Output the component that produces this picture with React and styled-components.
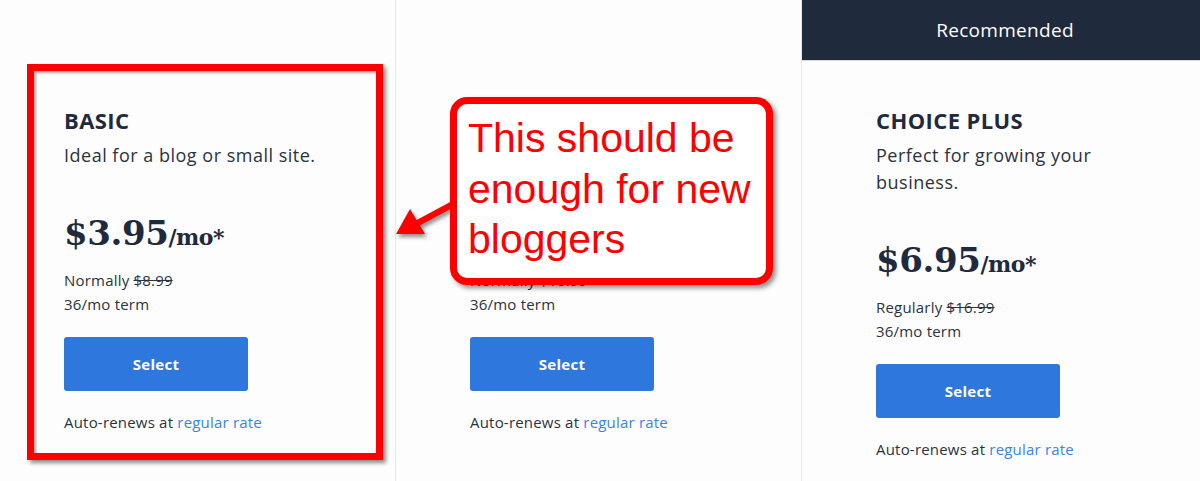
import React from "react";
import styled, { createGlobalStyle } from "styled-components";

const Global = createGlobalStyle`
  html, body { margin: 0; padding: 0; background: #fdfdfd; }
  * { box-sizing: border-box; }
`;

const Page = styled.div`
  position: relative;
  width: 1200px;
  height: 481px;
  overflow: hidden;
  background: #fdfdfd;
  font-family: "Open Sans", "Lato", sans-serif;
  color: #2b3240;
`;

const Columns = styled.div`
  display: grid;
  grid-template-columns: 396px 406px 398px;
  height: 100%;
`;

const Column = styled.section`
  display: flex;
  flex-direction: column;
  border-right: ${(p) => (p.$last ? "none" : "1px solid #e6e7ea")};
  background: #fdfdfd;
`;

const Header = styled.div`
  height: 61px;
  flex: none;
  display: flex;
  align-items: center;
  justify-content: center;
  padding-left: ${(p) => (p.$dark ? "8px" : "0")};
  background: ${(p) => (p.$dark ? "#1f2a3d" : "transparent")};
  border-bottom: ${(p) => (p.$dark ? "1px solid #d5d8de" : "none")};
  color: #ffffff;
  font-size: 19px;
  letter-spacing: 0.3px;
`;

const Body = styled.div`
  display: flex;
  flex-direction: column;
  align-items: flex-start;
  padding: 46px 0 0 ${(p) => p.$pad}px;
`;

const Title = styled.h2`
  margin: 0;
  font-size: 22px;
  line-height: 26px;
  font-weight: 700;
  color: #1f2a3d;
  letter-spacing: 0.4px;
`;

const Desc = styled.p`
  margin: 9px 0 0;
  max-width: 262px;
  font-size: 18px;
  line-height: 27px;
  color: #2b3240;
  letter-spacing: 0.5px;
`;

const Price = styled.div`
  margin-top: 44px;
  font-family: "DejaVu Serif", "Liberation Serif", serif;
  font-weight: 700;
  font-size: 34px;
  line-height: 40px;
  color: #1f2a3d;
  letter-spacing: -0.4px;
`;

const Per = styled.span`
  font-size: 22px;
  letter-spacing: -0.5px;
`;

const Meta = styled.div`
  margin-top: 11px;
  font-size: 15px;
  line-height: 24px;
  color: #2b3240;
  letter-spacing: 0.2px;
`;

const Strike = styled.span`
  text-decoration: line-through;
`;

const SelectButton = styled.button`
  margin-top: 21px;
  width: 184px;
  height: 54px;
  border: none;
  border-radius: 3px;
  background: #2e77dc;
  color: #ffffff;
  font-family: "Open Sans", "Lato", sans-serif;
  font-size: 15px;
  font-weight: 700;
  letter-spacing: 0.3px;
  cursor: pointer;
`;

const Renew = styled.div`
  margin-top: 19px;
  font-size: 15px;
  line-height: 24px;
  color: #2b3240;
  letter-spacing: 0.2px;
`;

const Link = styled.a`
  color: #3a84e2;
  text-decoration: none;
`;

const Frame = styled.div`
  position: absolute;
  left: 27px;
  top: 64px;
  width: 356px;
  height: 396px;
  border: 7px solid #fe0000;
  box-shadow: 3px 3px 4px rgba(0, 0, 0, 0.45), inset 2px 2px 3px rgba(0, 0, 0, 0.35);
  pointer-events: none;
`;

const Callout = styled.div`
  position: absolute;
  left: 450px;
  top: 97px;
  width: 323px;
  height: 188px;
  padding: 9px 0 0 11px;
  border: 7px solid #fe0000;
  border-radius: 17px;
  background: #ffffff;
  box-shadow: 3px 3px 5px rgba(0, 0, 0, 0.45);
  font-family: "Liberation Sans", Arial, sans-serif;
  font-size: 41px;
  line-height: 50.5px;
  color: #fe0000;
`;

const Arrow = styled.svg`
  position: absolute;
  left: 390px;
  top: 195px;
  width: 70px;
  height: 50px;
  overflow: visible;
  filter: drop-shadow(2px 3px 2px rgba(0, 0, 0, 0.45));
  pointer-events: none;
`;

const plans = [
  {
    name: "BASIC",
    desc: "Ideal for a blog or small site.",
    price: "$3.95",
    label: "Normally",
    old: "$8.99",
    pad: 64,
  },
  {
    name: "PLUS",
    desc: "Perfect for multiple sites.",
    price: "$5.95",
    label: "Normally",
    old: "$10.99",
    pad: 74,
  },
  {
    name: "CHOICE PLUS",
    desc: "Perfect for growing your business.",
    price: "$6.95",
    label: "Regularly",
    old: "$16.99",
    pad: 74,
    recommended: true,
  },
];

export default function App() {
  return (
    <Page>
      <Global />
      <Columns>
        {plans.map((p, i) => (
          <Column key={p.name} $last={i === plans.length - 1}>
            <Header $dark={p.recommended}>{p.recommended ? "Recommended" : null}</Header>
            <Body $pad={p.pad}>
              <Title>{p.name}</Title>
              <Desc>{p.desc}</Desc>
              <Price>
                {p.price}
                <Per>/mo*</Per>
              </Price>
              <Meta>
                {p.label} <Strike>{p.old}</Strike>
                <br />
                36/mo term
              </Meta>
              <SelectButton>Select</SelectButton>
              <Renew>
                Auto-renews at <Link href="#">regular rate</Link>
              </Renew>
            </Body>
          </Column>
        ))}
      </Columns>

      <Frame />

      <Arrow viewBox="390 195 70 50">
        <line x1="455" y1="203" x2="414" y2="225" stroke="#fe0000" strokeWidth="6.5" />
        <polygon points="396,234 425,234 410,209" fill="#fe0000" />
      </Arrow>

      <Callout>
        This should be
        <br />
        enough for new
        <br />
        bloggers
      </Callout>
    </Page>
  );
}
